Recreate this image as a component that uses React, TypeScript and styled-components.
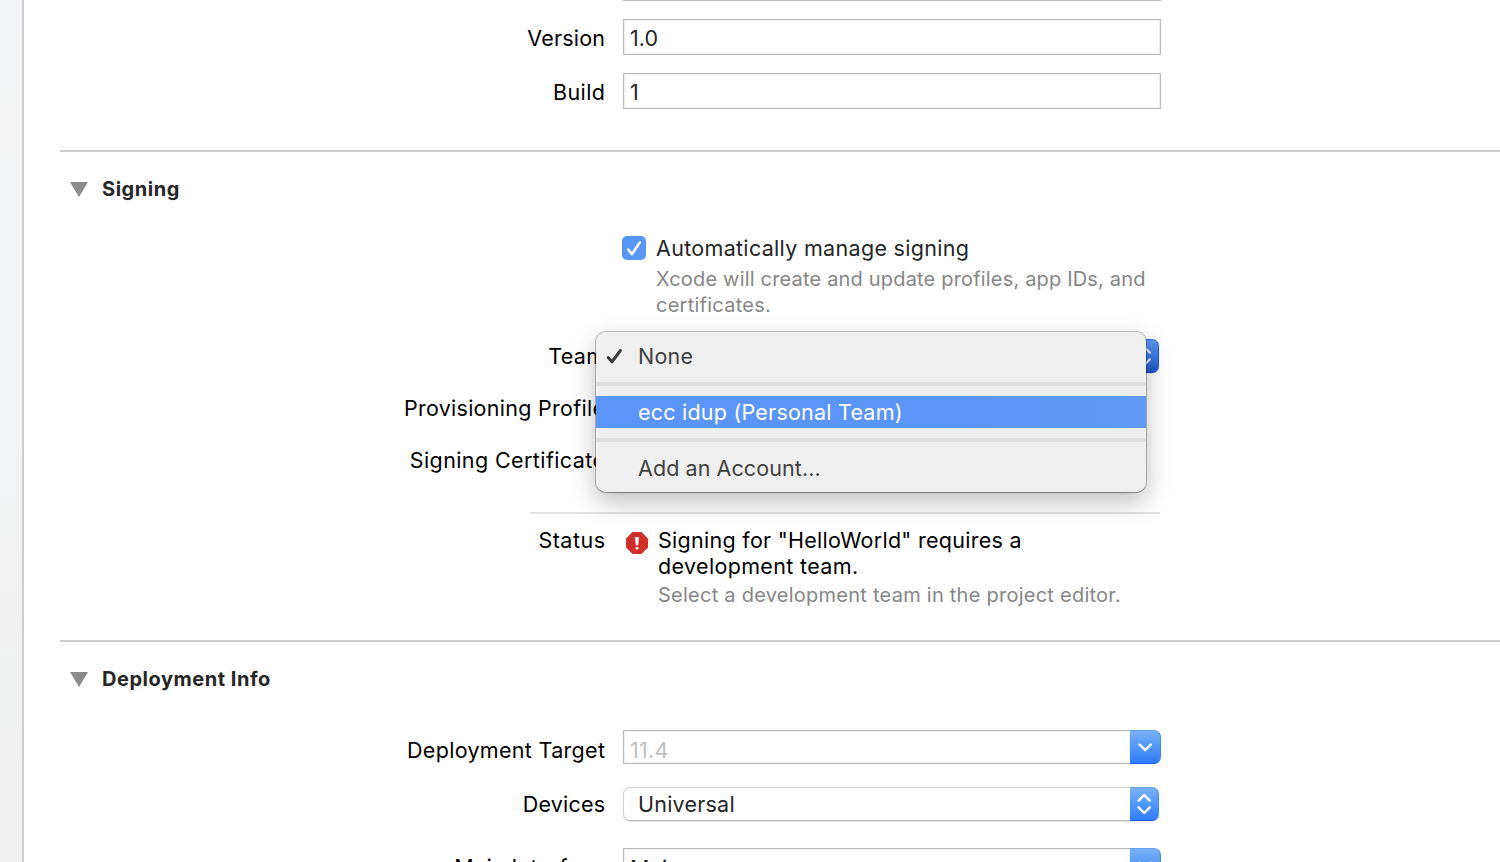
import React from 'react';
import styled, { createGlobalStyle, css } from 'styled-components';

const GlobalStyle = createGlobalStyle`
  * { box-sizing: border-box; }
  html, body { margin: 0; padding: 0; background: #fff; overflow: hidden; }
  body { font-family: Inter, "Liberation Sans", sans-serif; color: #000; }
`;

const Window = styled.div`
  display: flex;
  width: 1500px;
  height: 862px;
  overflow: hidden;
  background: #fff;
`;

const Sidebar = styled.aside`
  flex: 0 0 24px;
  border-right: 2px solid #cdcdcd;
  background: linear-gradient(#f2f4f7 0, #f3f3f3 130px, #f2f3f5 200px, #f2f3f4 450px, #f0f0f0 620px, #eff1f0 690px, #efefef 760px, #efefef 100%);
`;

const Editor = styled.main`
  flex: 1;
  min-width: 0;
`;

const Section = styled.section<{ $height: number }>`
  height: ${(p) => p.$height}px;
`;

const Divider = styled.div`
  height: 2px;
  margin-left: 36px;
  background: #cbcbcb;
`;

const FieldEdge = styled.div`
  width: 538px;
  height: 1px;
  margin: 0 0 18px 599px;
  background: #bababa;
`;

const Heading = styled.header`
  display: flex;
  align-items: center;
  height: 74px;
  padding-left: 46px;
  gap: 14px;
`;

const Title = styled.h2`
  margin: 0;
  font-size: 20px;
  line-height: 26px;
  font-weight: 700;
  letter-spacing: 0.53px;
  color: #262626;
  white-space: nowrap;
`;

const Row = styled.div<{ $height: number; $gap?: number }>`
  position: relative;
  display: grid;
  grid-template-columns: 581px 538px;
  column-gap: 18px;
  align-items: center;
  height: ${(p) => p.$height}px;
  margin-bottom: ${(p) => p.$gap ?? 0}px;
`;

const Text = styled.span<{ $track?: number; $color?: string; $size?: number }>`
  display: block;
  font-size: ${(p) => p.$size ?? 21.5}px;
  line-height: 26px;
  letter-spacing: ${(p) => p.$track ?? 0}px;
  color: ${(p) => p.$color ?? '#262626'};
  white-space: nowrap;
`;

const Label = styled(Text)<{ $drop?: number }>`
  justify-self: end;
  margin-right: ${(p) => -(p.$track ?? 0)}px;
  padding-top: ${(p) => (p.$drop ?? 0) * 2}px;
  color: #000;
`;

const Field = styled.div<{ $height: number }>`
  display: flex;
  align-items: center;
  height: ${(p) => p.$height}px;
  padding: 2px 0 0 6px;
  border: 1px solid #bababa;
  box-shadow: inset 0 0 0 1px #f0f0f0;
  background: #fff;
`;

const blue = css`
  background: linear-gradient(#7ab0f5, #559af7 45%, #2f7cf8);
  border: 1px solid #4088f0;
  border-top-color: #64a2f0;
  border-bottom-color: #1c62f5;
`;

const Combo = styled.div`
  display: flex;
  height: 34px;
`;

const ComboField = styled(Field)`
  flex: 1;
  padding-top: 5px;
  border-right: 0;
`;

const ComboButton = styled.div`
  ${blue}
  display: flex;
  align-items: center;
  justify-content: center;
  width: 31px;
  height: 34px;
  border-left: 0;
  border-radius: 0 7px 7px 0;
`;

const Popup = styled.div`
  display: flex;
  width: 536px;
  height: 34px;
  border-radius: 7px;
  box-shadow: 0 1px 1px rgba(0, 0, 0, 0.12);
`;

const PopupValue = styled.div`
  flex: 1;
  display: flex;
  align-items: center;
  padding-left: 14px;
  border: 1px solid #d2d2d2;
  border-bottom-color: #bdbdbd;
  border-right: 0;
  border-radius: 7px 0 0 7px;
  background: #fff;
`;

const PopupButton = styled.div<{ $pressed?: boolean }>`
  ${blue}
  display: flex;
  align-items: center;
  justify-content: center;
  width: 29px;
  height: 34px;
  border-left: 0;
  border-radius: 0 7px 7px 0;
  ${(p) =>
    p.$pressed &&
    css`
      background: linear-gradient(#5c96ec, #3c7bdf 50%, #2159c8);
      border-color: #3170e0 #1f57d2 #143fc4;
    `}
`;

const CheckLine = styled.div`
  display: flex;
  align-items: center;
  gap: 10px;
  margin-left: -1px;
`;

const Checkbox = styled.div`
  display: flex;
  width: 24px;
  height: 24px;
  border-radius: 5px;
  background: #5697f6;
`;

const Help = styled.div`
  height: 64px;
  margin: -4px 0 0 632px;
`;

const Menu = styled.div`
  position: absolute;
  z-index: 2;
  left: 572px;
  top: 2px;
  width: 550px;
  height: 160px;
  padding: 8px 0;
  border-radius: 10px;
  background: #efefef;
  overflow: hidden;
`;

const MenuShadow = styled(Menu)`
  z-index: 1;
  overflow: visible;
  box-shadow: 0 0 0 1px rgba(0, 0, 0, 0.24), 0 1px 1px rgba(0, 0, 0, 0.2), 0 10px 26px rgba(0, 0, 0, 0.26);
`;

const MenuItem = styled.div<{ $active?: boolean }>`
  display: grid;
  grid-template-columns: 42px 1fr;
  align-items: center;
  height: 32px;
  background: ${(p) => (p.$active ? 'linear-gradient(90deg, #5c95f8, #5c95f8 60%, #629af7)' : 'transparent')};
`;

const MenuRule = styled.div`
  height: 4px;
  margin: 10px 0;
  background: #dedede;
`;

const StatusRule = styled.div`
  width: 630px;
  height: 2px;
  margin: 26px 0 0 506px;
  background: #e2e2e2;
`;

const Status = styled.div`
  display: grid;
  grid-template-columns: 581px 22px 1fr;
  align-items: start;
  padding-top: 13px;
`;

const StatusIcon = styled.svg`
  display: block;
  margin: 5px 0 0 21px;
`;

const StatusBody = styled.div`
  padding-left: 31px;
`;

const StatusHint = styled.div`
  padding-top: 3px;
`;

const Triangle = () => (
  <svg width="18" height="15" viewBox="0 0 18 15">
    <path d="M0 0H18L9 15Z" fill="#8b8b8b" />
  </svg>
);

const UpDown = ({ color = '#fff' }: { color?: string }) => (
  <svg width="14" height="22" viewBox="0 0 14 22" fill="none" stroke={color} strokeWidth="2.4" strokeLinecap="round" strokeLinejoin="round">
    <path d="M1.6 7.6L7.2 2l5.6 5.6M1.6 14.4L7.2 20l5.600-5.600" />
  </svg>
);

const Down = () => (
  <svg width="14" height="9" viewBox="0 0 14 9" fill="none" stroke="#fff" strokeWidth="2.4" strokeLinecap="round" strokeLinejoin="round">
    <path d="M1.6 1.6L7.2 7.200l5.600-5.600" />
  </svg>
);

export default function App() {
  return (
    <>
      <GlobalStyle />
      <Window>
        <Sidebar />
        <Editor>
          <Section $height={150}>
            <FieldEdge />
            <Row $height={36} $gap={18}>
              <Label $track={0.2} $drop={1}>Version</Label>
              <Field $height={36}><Text $track={0.1}>1.0</Text></Field>
            </Row>
            <Row $height={36}>
              <Label $track={0.4} $drop={1}>Build</Label>
              <Field $height={36}><Text>1</Text></Field>
            </Row>
          </Section>
          <Divider />
          <Section $height={488}>
            <Heading><Triangle /><Title>Signing</Title></Heading>
            <Row $height={44}>
              <span />
              <CheckLine>
                <Checkbox>
                  <svg width="24" height="24" viewBox="0 0 24 24" fill="none" stroke="#fff" strokeWidth="2.6" strokeLinecap="round" strokeLinejoin="round">
                    <path d="M6.300 13.600L10 18.100L17.800 6.500" />
                  </svg>
                </Checkbox>
                <Text $track={0.31}>Automatically manage signing</Text>
              </CheckLine>
            </Row>
            <Help>
              <Text $size={20} $track={0.18} $color="#868686">Xcode will create and update profiles, app IDs, and</Text>
              <Text $size={20} $track={0.25} $color="#868686">certificates.</Text>
            </Help>
            <Row $height={52}>
              <Label $track={0.3}>Team</Label>
              <Popup>
                <PopupValue />
                <PopupButton $pressed><UpDown color="#d5e0f5" /></PopupButton>
              </Popup>
              <MenuShadow />
              <Menu>
                <MenuItem>
                  <svg width="42" height="32" viewBox="0 0 42 32" fill="none" stroke="#3b3b3b" strokeWidth="3" strokeLinecap="round" strokeLinejoin="round">
                    <path d="M12.200 17.500L16 21.800L24.400 10.500" />
                  </svg>
                  <Text $track={0.25} $color="#414141">None</Text>
                </MenuItem>
                <MenuRule />
                <MenuItem $active><span /><Text $track={0.22} $color="#fff">ecc idup (Personal Team)</Text></MenuItem>
                <MenuRule />
                <MenuItem><span /><Text $track={0.08} $color="#414141">Add an Account...</Text></MenuItem>
              </Menu>
            </Row>
            <Row $height={52}><Label $track={0.28}>Provisioning Profile</Label></Row>
            <Row $height={52}><Label $track={0.4}>Signing Certificate</Label></Row>
            <StatusRule />
            <Status>
              <Label $track={0.5}>Status</Label>
              <StatusIcon width="22" height="22" viewBox="0 0 22 22">
                <path d="M6.500 0h9L22 6.500v9L15.500 22h-9L0 15.500v-9Z" fill="#d03029" />
                <path d="M9 5h4l-.8 8.200H9.800ZM9.700 15h2.600v2.600H9.700Z" fill="#fff" />
              </StatusIcon>
              <StatusBody>
                <Text $track={0.28} $color="#000">Signing for "HelloWorld" requires a</Text>
                <Text $track={0.35} $color="#000">development team.</Text>
                <StatusHint><Text $size={20} $track={0.25} $color="#868686">Select a development team in the project editor.</Text></StatusHint>
              </StatusBody>
            </Status>
          </Section>
          <Divider />
          <Section $height={220}>
            <Heading><Triangle /><Title>Deployment Info</Title></Heading>
            <Row $height={62}>
              <Label $track={0.31} $drop={3}>Deployment Target</Label>
              <Combo>
                <ComboField $height={34}><Text $track={0.3} $color="#bfbfbf">11.4</Text></ComboField>
                <ComboButton><Down /></ComboButton>
              </Combo>
            </Row>
            <Row $height={52}>
              <Label $track={0.2}>Devices</Label>
              <Popup>
                <PopupValue><Text $track={0.22}>Universal</Text></PopupValue>
                <PopupButton><UpDown /></PopupButton>
              </Popup>
            </Row>
            <Row $height={70}>
              <Label $track={0.35} $drop={2}>Main Interface</Label>
              <Combo>
                <ComboField $height={34}><Text $track={0.2}>Main</Text></ComboField>
                <ComboButton><Down /></ComboButton>
              </Combo>
            </Row>
          </Section>
        </Editor>
      </Window>
    </>
  );
}
